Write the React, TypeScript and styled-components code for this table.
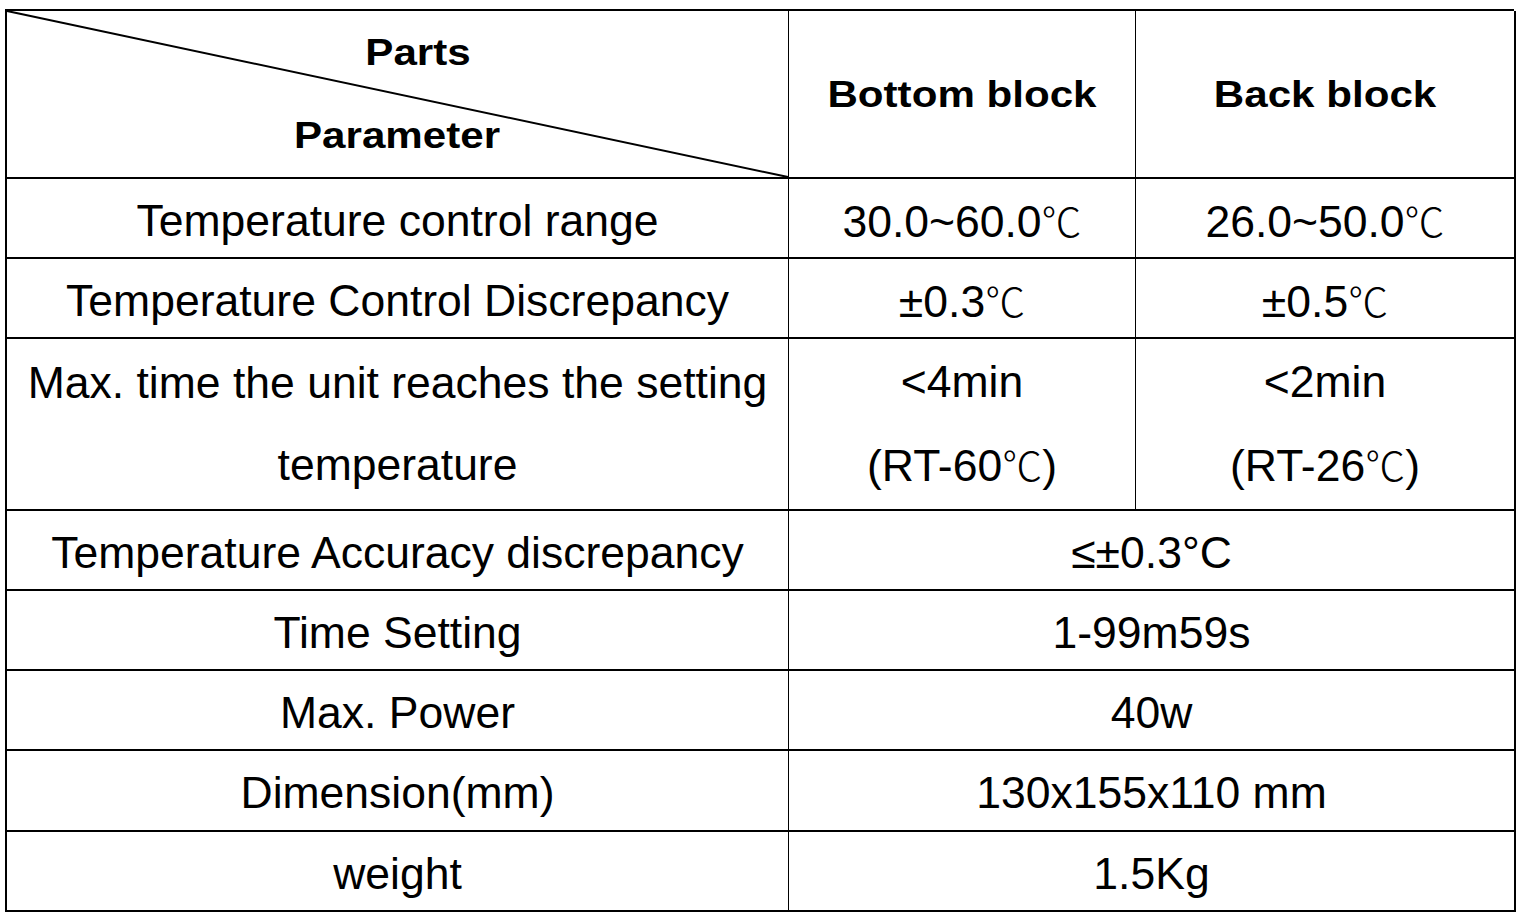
import React from "react"
import styled, { createGlobalStyle } from "styled-components"

const GlobalStyle = createGlobalStyle`
  html, body {
    margin: 0;
    padding: 0;
    background: #ffffff;
  }
  body {
    font-family: "Liberation Sans", Arial, sans-serif;
    color: #000;
  }
`

type Row = {
  label: React.ReactNode
  values: React.ReactNode[]
  tall?: boolean
}

const C = () => <Celsius>℃</Celsius>

const rows: Row[] = [
  {
    label: "Temperature control range",
    values: [
      <>
        30.0~60.0
        <C />
      </>,
      <>
        26.0~50.0
        <C />
      </>,
    ],
  },
  {
    label: "Temperature Control Discrepancy",
    values: [
      <>
        ±0.3
        <C />
      </>,
      <>
        ±0.5
        <C />
      </>,
    ],
  },
  {
    label: (
      <>
        Max. time the unit reaches the setting
        <br />
        temperature
      </>
    ),
    values: [
      <>
        &lt;4min
        <br />
        (RT-60
        <C />)
      </>,
      <>
        &lt;2min
        <br />
        (RT-26
        <C />)
      </>,
    ],
    tall: true,
  },
  { label: "Temperature Accuracy discrepancy", values: ["≤±0.3°C"] },
  { label: "Time Setting", values: ["1-99m59s"] },
  { label: "Max. Power", values: ["40w"] },
  { label: "Dimension(mm)", values: ["130x155x110 mm"] },
  { label: "weight", values: ["1.5Kg"] },
]

const App = (): JSX.Element => {
  return (
    <>
      <GlobalStyle />
      <Page>
        <Table>
          <HeaderCorner>
            <Diagonal viewBox="0 0 100 100" preserveAspectRatio="none">
              <line
                x1="0"
                y1="0"
                x2="100"
                y2="100"
                stroke="#000"
                strokeWidth="2"
                vectorEffect="non-scaling-stroke"
              />
            </Diagonal>
            <CornerLabel $shift={42}>
              <Bold>Parts</Bold>
            </CornerLabel>
            <CornerLabel $shift={0}>
              <Bold>Parameter</Bold>
            </CornerLabel>
          </HeaderCorner>
          <HeadCell>
            <Bold>Bottom block</Bold>
          </HeadCell>
          <HeadCell $last>
            <Bold>Back block</Bold>
          </HeadCell>

          {rows.map((row, i) => (
            <React.Fragment key={i}>
              <Cell $tall={row.tall} $bottom={i === rows.length - 1}>
                <CellText $tall={row.tall}>{row.label}</CellText>
              </Cell>
              {row.values.map((v, j) => (
                <Cell
                  key={j}
                  $tall={row.tall}
                  $span={row.values.length === 1}
                  $last={j === row.values.length - 1}
                  $bottom={i === rows.length - 1}
                >
                  <CellText $tall={row.tall}>{v}</CellText>
                </Cell>
              ))}
            </React.Fragment>
          ))}
        </Table>
      </Page>
    </>
  )
}

export default App

const Page = styled.div`
  padding: 9px 0 0 5px;
  width: 1520px;
  height: 920px;
  box-sizing: border-box;
`

const Table = styled.div`
  display: grid;
  grid-template-columns: 782px 347px 380px;
  grid-template-rows: 168px 80px 80px 172px 80px 80px 80px 81px 80px;
  width: 1509px;
  border-top: 2px solid #000;
  border-left: 2px solid #000;
  box-sizing: border-box;
`

const cellBorders = `
  border-right: 1px solid #000;
  border-bottom: 2px solid #000;
  box-sizing: border-box;
`

const HeaderCorner = styled.div`
  ${cellBorders}
  position: relative;
  display: flex;
  flex-direction: column;
  align-items: center;
  padding-top: 24px;
  gap: 47px;
`

const Diagonal = styled.svg`
  position: absolute;
  left: 0;
  top: 0;
  width: 100%;
  height: 100%;
  overflow: visible;
`

const CornerLabel = styled.div<{ $shift: number }>`
  padding-left: ${p => p.$shift}px;
  line-height: 36px;
  font-size: 36px;
  height: 36px;
`

const Bold = styled.span`
  display: inline-block;
  font-weight: 700;
  font-size: 36px;
  line-height: 36px;
  transform: scaleX(1.17);
`

const HeadCell = styled.div<{ $last?: boolean }>`
  ${cellBorders}
  ${p => (p.$last ? "border-right: 2px solid #000;" : "")}
  display: flex;
  align-items: center;
  justify-content: center;
  padding-top: 2px;
`

const Cell = styled.div<{
  $tall?: boolean
  $span?: boolean
  $last?: boolean
  $bottom?: boolean
}>`
  ${cellBorders}
  ${p => (p.$span ? "grid-column: 2 / span 2;" : "")}
  ${p => (p.$last ? "border-right: 2px solid #000;" : "")}
  ${p => (p.$bottom ? "border-bottom: 2px solid #000;" : "")}
  display: flex;
  align-items: center;
  justify-content: center;
  text-align: center;
  padding-top: ${p => (p.$tall ? "0" : "5px")};
`

const CellText = styled.div<{ $tall?: boolean }>`
  font-size: 44.5px;
  line-height: ${p => (p.$tall ? "82px" : "44px")};
  white-space: nowrap;
`

const Celsius = styled.span`
  font-family: "Noto Sans CJK SC", "DejaVu Sans", sans-serif;
  font-weight: 300;
  font-size: 40px;
`
